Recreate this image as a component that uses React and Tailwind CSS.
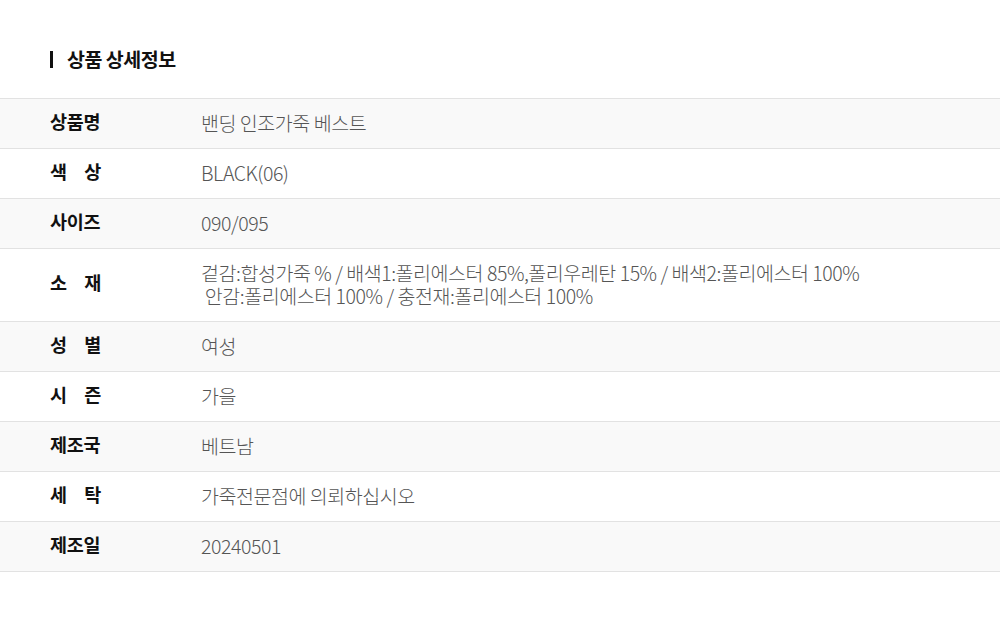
import React from 'react';

const rows = [
    { label: ['상품명'], value: '밴딩 인조가죽 베스트' },
    { label: ['색', '상'], value: 'BLACK(06)' },
    { label: ['사이즈'], value: '090/095' },
    {
        label: ['소', '재'],
        value: (
            <>
                겉감:합성가죽 % / 배색1:폴리에스터 85%,폴리우레탄 15% / 배색2:폴리에스터 100%
                <br />
                &nbsp;안감:폴리에스터 100% / 충전재:폴리에스터 100%
            </>
        ),
        tall: true,
    },
    { label: ['성', '별'], value: '여성' },
    { label: ['시', '즌'], value: '가을' },
    { label: ['제조국'], value: '베트남' },
    { label: ['세', '탁'], value: '가죽전문점에 의뢰하십시오' },
    { label: ['제조일'], value: '20240501' },
];

const App = () => {
    return (
        <div
            className="w-[1000px] h-[621px] bg-white"
            style={{ fontFamily: '"Noto Sans CJK KR", "Noto Sans", sans-serif' }}
        >
            {/* Title */}
            <div className="flex items-center h-[98px] pl-[50px] pt-[20px]">
                <span className="w-[3px] h-[17px] bg-[#111] mr-[14px]" />
                <h2 className="text-[19.5px] font-bold text-[#111] tracking-[-0.5px] leading-none">상품 상세정보</h2>
            </div>

            {/* Table */}
            <div className="border-t border-[#e2e2e2]">
                {rows.map((row, i) => (
                    <div
                        key={i}
                        className={`flex items-center border-b border-[#e2e2e2] ${row.tall ? 'h-[73px]' : 'h-[50px]'} ${i % 2 === 0 ? 'bg-[#f9f9f9]' : 'bg-white'}`}
                    >
                        <div className="w-[201px] pl-[50px] shrink-0 pb-[4px]">
                            <div className="w-[51px] flex justify-between text-[18.5px] font-bold text-[#111] tracking-[-0.3px]">
                                {row.label.map((l, j) => (
                                    <span key={j}>{l}</span>
                                ))}
                            </div>
                        </div>
                        <div className="text-[19.5px] font-light text-[#555] tracking-[-0.45px] leading-[23px] pb-[3px]">
                            {row.value}
                        </div>
                    </div>
                ))}
            </div>
        </div>
    );
};

export default App;
